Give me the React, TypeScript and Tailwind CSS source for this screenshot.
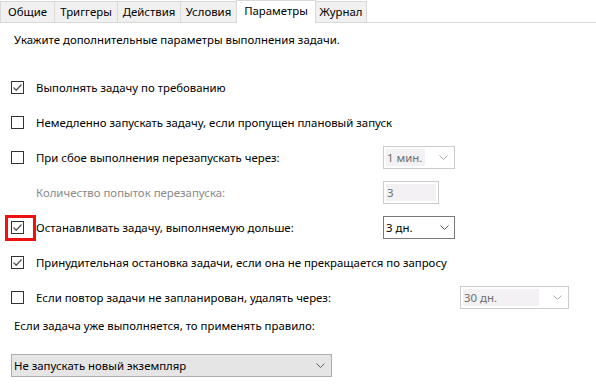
import { ReactNode } from "react";

const tabs = [
  { t: "Общие", w: "w-[55px]" },
  { t: "Триггеры", w: "w-[64px]" },
  { t: "Действия", w: "w-[64px]" },
  { t: "Условия", w: "w-[57px]" },
  { t: "Параметры", w: "w-[80px]", active: true },
  { t: "Журнал", w: "w-[52px]" },
];

function Chevron(props: { light?: boolean }) {
  return (
    <svg width="9" height="5" viewBox="0 0 9 5" className="shrink-0">
      <path
        d="M0.5 0.5 L4.5 4.5 L8.5 0.5"
        fill="none"
        stroke={props.light ? "#a8a8a8" : "#606060"}
        strokeWidth="1"
      />
    </svg>
  );
}

function Check(props: { on?: boolean }) {
  return (
    <div className="w-[13px] h-[13px] border border-[#333] bg-white flex items-center justify-center shrink-0">
      {props.on && (
        <svg width="11" height="11" viewBox="0 0 11 11">
          <path d="M1.5 5.5 L4.2 8.2 L9.5 2.5" fill="none" stroke="#555" strokeWidth="1.3" />
        </svg>
      )}
    </div>
  );
}

function Row(props: { children: ReactNode; right?: ReactNode; col?: string }) {
  return (
    <div className="h-[35px] flex items-center">
      <div className={`${props.col ?? "w-[383px]"} shrink-0 whitespace-nowrap`}>{props.children}</div>
      {props.right}
    </div>
  );
}

function Option(props: { on?: boolean; text: string; boxed?: boolean }) {
  return (
    <div className="flex items-center">
      <div className="w-[36px] shrink-0 flex items-center pl-[11px] relative">
        {props.boxed && (
          <div className="absolute left-[5px] top-[-6px] w-[31px] h-[26px] border-[3px] border-[#ee1111]" />
        )}
        <Check on={props.on} />
      </div>
      <span className="shrink-0">{props.text}</span>
    </div>
  );
}

function Combo(props: { text: string; w: string; disabled?: boolean }) {
  if (props.disabled) {
    return (
      <div className={`${props.w} h-[23px] border border-[#cccccc] bg-white flex items-center p-[2px]`}>
        <div className="flex-1 h-full bg-[#f4f1f4] text-[#6d6d6d] flex items-center pl-[1px] mr-[14px]">
          {props.text}
        </div>
        <div className="pr-[4px]">
          <Chevron light />
        </div>
      </div>
    );
  }
  return (
    <div className={`${props.w} h-[23px] border border-[#7a7a7a] bg-white flex items-center pl-[2px] pr-[5px] justify-between`}>
      <span>{props.text}</span>
      <Chevron />
    </div>
  );
}

export default function App() {
  return (
    <div
      className="w-[596px] h-[388px] bg-white text-[11.4px] text-black overflow-hidden"
      style={{ fontFamily: "'Noto Sans', sans-serif" }}
    >
      <div className="h-[23px] flex items-end border-b border-[#d9d9d9]">
        {tabs.map((tab, i) =>
          tab.active ? (
            <div
              key={i}
              className={`${tab.w} h-[23px] bg-white border border-b-0 border-[#d9d9d9] -mb-px -ml-px flex items-center justify-center pb-[2px]`}
            >
              {tab.t}
            </div>
          ) : (
            <div
              key={i}
              className={`${tab.w} h-[21px] bg-[#f0f0f0] border border-[#d9d9d9] border-b-0 -ml-px first:ml-0 flex items-center justify-center`}
            >
              {tab.t}
            </div>
          )
        )}
      </div>
      <div className="pl-[14px] h-[33px] flex items-center">Укажите дополнительные параметры выполнения задачи.</div>
      <div className="h-[14px]" />
      <Row>
        <Option on text="Выполнять задачу по требованию" />
      </Row>
      <Row>
        <Option text="Немедленно запускать задачу, если пропущен плановый запуск" />
      </Row>
      <Row right={<Combo text="1 мин." w="w-[72px]" disabled />}>
        <Option text="При сбое выполнения перезапускать через:" />
      </Row>
      <Row
        right={
          <div className="w-[56px] h-[23px] border border-[#cccccc] bg-white p-[2px]">
            <div className="h-full bg-[#f4f1f4] text-[#6d6d6d] flex items-center pl-[1px]">3</div>
          </div>
        }
      >
        <div className="pl-[36px] text-[#8a8a8a]">Количество попыток перезапуска:</div>
      </Row>
      <Row right={<Combo text="3 дн." w="w-[72px]" />}>
        <Option on boxed text="Останавливать задачу, выполняемую дольше:" />
      </Row>
      <Row>
        <Option on text="Принудительная остановка задачи, если она не прекращается по запросу" />
      </Row>
      <Row col="w-[460px]" right={<Combo text="30 дн." w="w-[109px]" disabled />}>
        <Option text="Если повтор задачи не запланирован, удалять через:" />
      </Row>
      <div className="pl-[14px] h-[22px] flex items-center">Если задача уже выполняется, то применять правило:</div>
      <div className="h-[17px]" />
      <div className="ml-[11px] w-[321px] h-[23px] border border-[#adadad] bg-[#e5e5e5] flex items-center justify-between pl-[2px] pr-[6px]">
        <span>Не запускать новый экземпляр</span>
        <Chevron />
      </div>
    </div>
  );
}
